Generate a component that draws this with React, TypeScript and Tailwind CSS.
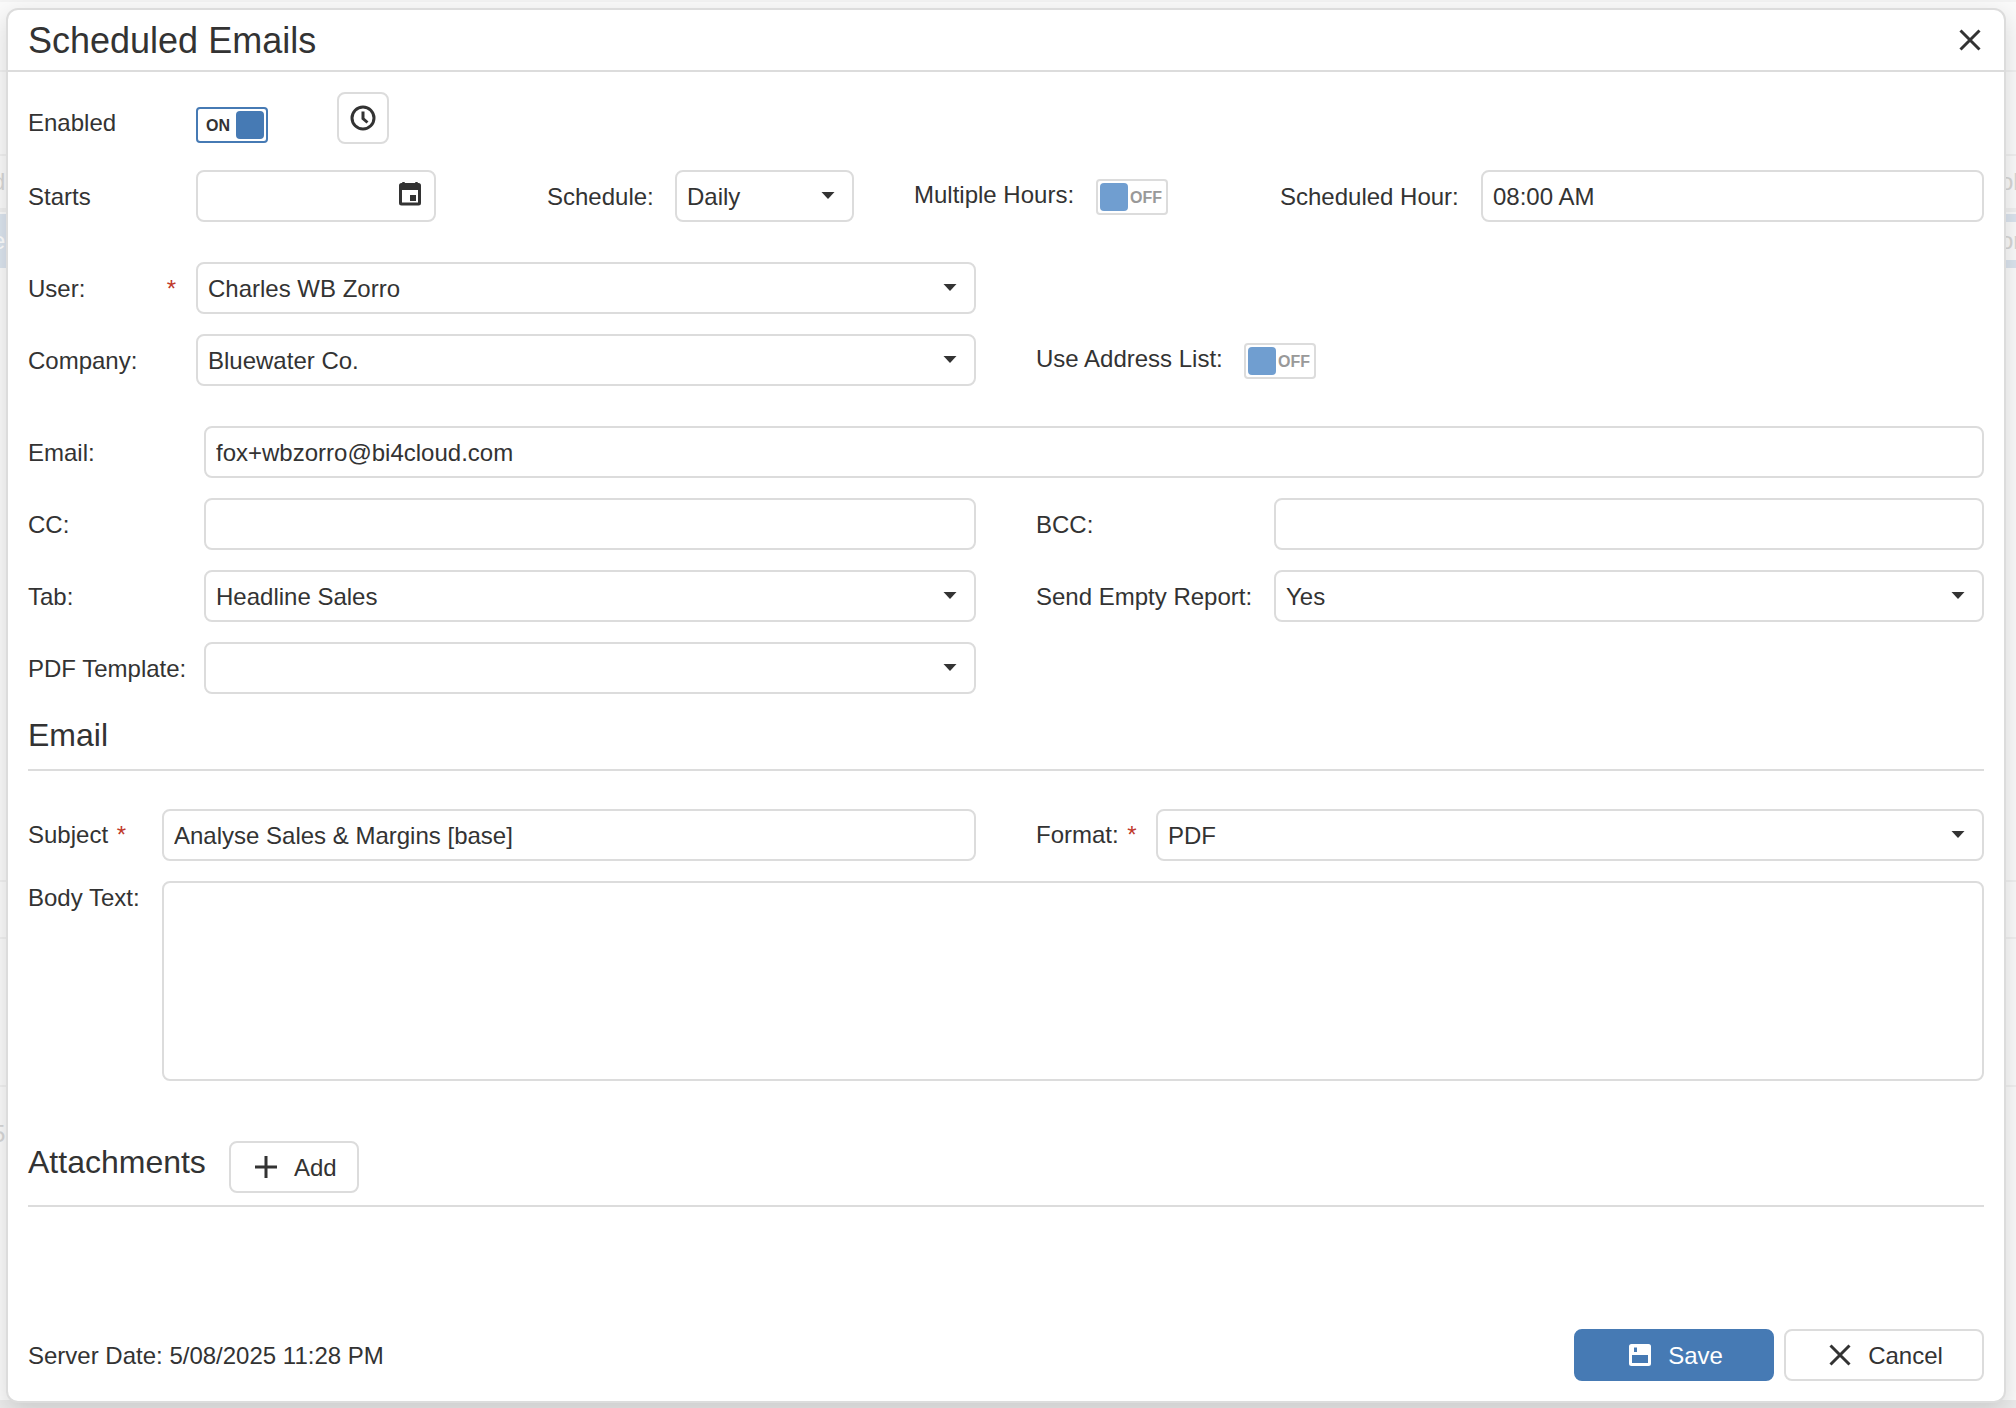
import React, { useId, useState } from "react";

const fieldClass =
  "block h-[52px] w-full min-w-0 rounded-lg border-2 border-[#dcdcdc] bg-white px-2.5 pt-0.5 text-[24px] leading-7 text-[#333333] outline-none focus:border-[#467ab4]";

function TextField({ id, value = "", type = "text" }: { id: string; value?: string; type?: string }) {
  return <input id={id} type={type} defaultValue={value} className={fieldClass} />;
}

function SelectField({ id, options }: { id: string; options: string[] }) {
  return (
    <div className="relative w-full min-w-0">
      <select id={id} className={`${fieldClass} appearance-none pr-10`}>
        {options.map((o) => (
          <option key={o}>{o}</option>
        ))}
      </select>
      <svg viewBox="0 0 14 7" className="pointer-events-none absolute top-[22px] right-[19px] h-[7px] w-3.5" aria-hidden="true">
        <path d="M0.5 0h13L7 7z" fill="#333333" />
      </svg>
    </div>
  );
}

function Toggle({ id, initial = false }: { id: string; initial?: boolean }) {
  const [on, setOn] = useState(initial);
  return (
    <label
      htmlFor={id}
      className={`mt-0.5 flex h-9 w-[72px] shrink-0 cursor-pointer items-center justify-between rounded border-2 p-0.5 text-[16px] leading-5 font-bold ${
        on ? "border-[#467ab4] text-[#333333]" : "flex-row-reverse border-[#dcdcdc] text-[#999999]"
      }`}
    >
      <input id={id} type="checkbox" role="switch" checked={on} onChange={(e) => setOn(e.target.checked)} className="sr-only" />
      <span className="flex-1 pt-0.5 text-center">{on ? "ON" : "OFF"}</span>
      <span className={`size-7 rounded ${on ? "bg-[#467ab4]" : "bg-[#709ed0]"}`} />
    </label>
  );
}

function Star() {
  return <span className="pl-0.5 text-[#c0392b]">*</span>;
}

function CrossIcon() {
  return (
    <svg viewBox="0 0 22 22" className="size-[22px]" fill="none" stroke="currentColor" strokeWidth="3" aria-hidden="true">
      <path d="M1.500 1.500l19 19M20.500 1.500l-19 19" />
    </svg>
  );
}

function ClockIcon() {
  return (
    <svg viewBox="0 0 26 26" className="size-[26px]" fill="none" stroke="currentColor" strokeWidth="3" aria-hidden="true">
      <circle cx="13" cy="13" r="11" />
      <path d="M13 6.500v7l4.500 4" />
    </svg>
  );
}

function CalendarIcon() {
  return (
    <svg viewBox="0 0 22 24" className="h-6 w-[22px]" aria-hidden="true">
      <path
        fill="#333333"
        fillRule="evenodd"
        d="M3 1C3 .4 3.700 0 4.500 0S6 .4 6 1h10C16 .4 16.700 0 17.500 0S19 .4 19 1h.5A2.500 2.500 0 0 1 22 3.500v17.600a2.500 2.500 0 0 1-2.500 2.500h-17A2.500 2.500 0 0 1 0 21.100V3.500A2.500 2.500 0 0 1 2.500 1zM3 8v12.500h16V8zM11 13h6v6h-6z"
      />
    </svg>
  );
}

function SaveIcon() {
  return (
    <svg viewBox="0 0 22 22" className="size-[22px]" fill="currentColor" aria-hidden="true">
      <path
        fillRule="evenodd"
        d="M2.500 0h17A2.500 2.500 0 0 1 22 2.500v17a2.500 2.500 0 0 1-2.500 2.500h-17A2.500 2.500 0 0 1 0 19.500v-17A2.500 2.500 0 0 1 2.500 0zM5 3.500V8h3V3.500zM3 11v8h16v-8z"
      />
    </svg>
  );
}

function PlusIcon() {
  return (
    <svg viewBox="0 0 22 22" className="size-[22px]" fill="none" stroke="currentColor" strokeWidth="3" aria-hidden="true">
      <path d="M11 0v22M0 11h22" />
    </svg>
  );
}

function Row({
  label,
  htmlFor,
  labelClass,
  required,
  children,
}: {
  label: string;
  htmlFor: string;
  labelClass: string;
  required?: React.ReactNode;
  children: React.ReactNode;
}) {
  return (
    <div className="flex items-center">
      <label htmlFor={htmlFor} className={`shrink-0 whitespace-nowrap ${labelClass}`}>
        {label}
        {required}
      </label>
      {children}
    </div>
  );
}

/* Dimmed page that stays visible around the edges of the dialog. */
function Backdrop() {
  return (
    <div aria-hidden="true" className="absolute inset-0 flex flex-col overflow-hidden bg-[#fafafa] text-[#d6d6d6]">
      <div className="h-0.5 bg-[#f3f3f3]" />
      <div className="h-[70px] border-b-2 border-[#f0f0f0]" />
      <div className="h-[84px] border-b-2 border-[#f0f0f0]" />
      <div className="flex h-14 items-center justify-between border-b-4 border-[#f0f0f0]">
        <span className="-ml-2">d</span>
        <span className="w-4">ol</span>
      </div>
      <div className="flex h-14 pt-0.5">
        <div className="flex w-3 items-center bg-[#dbe4ee] text-white">
          <span className="-ml-2">e</span>
        </div>
        <div className="flex flex-1 items-center justify-end border-y-8 border-[#dbe4ee]">
          <span className="w-4">or</span>
        </div>
      </div>
      <div className="h-[614px] border-b-2 border-[#f0f0f0]" />
      <div className="h-[57px] border-b-2 border-[#f0f0f0]" />
      <div className="h-[148px] border-b-2 border-[#f0f0f0]" />
      <div className="flex h-[90px] items-center">
        <span className="-ml-2 pt-1">5</span>
      </div>
      <div className="mt-auto h-2 bg-[#ebebeb]" />
    </div>
  );
}

const buttonClass = "flex h-[52px] items-center justify-center rounded-lg border-2";

export default function App() {
  const uid = useId();
  const id = (name: string) => `${uid}-${name}`;

  return (
    <div className="relative flex min-h-screen flex-col px-1.5 pt-2 pb-[5px] font-['Liberation_Sans',Arial,sans-serif] text-[24px] leading-7 text-[#333333]">
      <Backdrop />
      <div
        role="dialog"
        aria-labelledby={id("title")}
        className="relative mr-1 flex flex-1 flex-col rounded-xl border-2 border-[#dcdcdc] bg-white shadow-[0_8px_24px_rgba(0,0,0,0.14)]"
      >
        <header className="flex h-[62px] items-center justify-between border-b-2 border-[#dcdcdc] px-5">
          <h1 id={id("title")} className="pt-0.5 text-[36px] leading-10">
            Scheduled Emails
          </h1>
          <button type="button" aria-label="Close" className="flex w-7 items-center justify-center">
            <CrossIcon />
          </button>
        </header>

        <form className="flex flex-1 flex-col p-5" onSubmit={(e) => e.preventDefault()}>
          <div className="flex h-[52px] items-center">
            <label htmlFor={id("enabled")} className="w-[168px] shrink-0 pt-2.5">
              Enabled
            </label>
            <div className="mt-3">
              <Toggle id={id("enabled")} initial />
            </div>
            <button type="button" aria-label="Schedule time" className={`${buttonClass} ml-[69px] w-[52px] border-[#dcdcdc]`}>
              <ClockIcon />
            </button>
          </div>

          <div className="mt-[26px] flex items-center">
            <label htmlFor={id("starts")} className="w-[168px] shrink-0 pt-0.5">
              Starts
            </label>
            <div className="relative w-60 shrink-0">
              <TextField id={id("starts")} />
              <button type="button" aria-label="Pick a date" className="absolute top-3 right-[15px]">
                <CalendarIcon />
              </button>
            </div>
            <label htmlFor={id("schedule")} className="ml-[111px] w-32 shrink-0 pt-0.5">
              Schedule:
            </label>
            <div className="w-[179px] shrink-0">
              <SelectField id={id("schedule")} options={["Daily", "Weekly", "Monthly"]} />
            </div>
            <label htmlFor={id("multi")} className="ml-[60px] w-[182px] shrink-0 pb-0.5">
              Multiple Hours:
            </label>
            <Toggle id={id("multi")} />
            <label htmlFor={id("hour")} className="ml-28 w-[201px] shrink-0 pt-0.5">
              Scheduled Hour:
            </label>
            <TextField id={id("hour")} value="08:00 AM" />
          </div>

          <div className="mt-10 grid grid-cols-2 gap-x-[60px] gap-y-5">
            <Row
              label="User:"
              htmlFor={id("user")}
              labelClass="flex w-[168px] justify-between pt-0.5 pr-5"
              required={<Star />}
            >
              <SelectField id={id("user")} options={["Charles WB Zorro"]} />
            </Row>
            <div />
            <Row label="Company:" htmlFor={id("company")} labelClass="w-[168px] pt-0.5">
              <SelectField id={id("company")} options={["Bluewater Co."]} />
            </Row>
            <Row label="Use Address List:" htmlFor={id("addresses")} labelClass="w-[208px] pb-0.5">
              <Toggle id={id("addresses")} />
            </Row>
          </div>

          <div className="mt-10 grid grid-cols-2 gap-x-[60px] gap-y-5">
            <div className="col-span-2">
              <Row label="Email:" htmlFor={id("email")} labelClass="w-44 pt-0.5">
                <TextField id={id("email")} value="fox+wbzorro@bi4cloud.com" />
              </Row>
            </div>
            <Row label="CC:" htmlFor={id("cc")} labelClass="w-44 pt-0.5">
              <TextField id={id("cc")} />
            </Row>
            <Row label="BCC:" htmlFor={id("bcc")} labelClass="w-[238px] pt-0.5">
              <TextField id={id("bcc")} />
            </Row>
            <Row label="Tab:" htmlFor={id("tab")} labelClass="w-44 pt-0.5">
              <SelectField id={id("tab")} options={["Headline Sales"]} />
            </Row>
            <Row label="Send Empty Report:" htmlFor={id("empty")} labelClass="w-[238px] pt-0.5">
              <SelectField id={id("empty")} options={["Yes", "No"]} />
            </Row>
            <Row label="PDF Template:" htmlFor={id("template")} labelClass="w-44 pt-0.5">
              <SelectField id={id("template")} options={[""]} />
            </Row>
          </div>

          <h2 className="mt-[21px] border-b-2 border-[#dcdcdc] pb-3.5 text-[32px] leading-10">Email</h2>

          <div className="mt-[38px] grid grid-cols-2 gap-x-[60px] gap-y-5">
            <Row label="Subject " htmlFor={id("subject")} labelClass="w-[134px]" required={<Star />}>
              <TextField id={id("subject")} value="Analyse Sales & Margins [base]" />
            </Row>
            <Row label="Format: " htmlFor={id("format")} labelClass="w-[120px]" required={<Star />}>
              <SelectField id={id("format")} options={["PDF"]} />
            </Row>
            <div className="col-span-2 flex items-start">
              <label htmlFor={id("body")} className="w-[134px] shrink-0 pt-[3px]">
                Body Text:
              </label>
              <textarea
                id={id("body")}
                className="block h-[200px] w-full resize-none rounded-lg border-2 border-[#dcdcdc] px-2.5 py-2 outline-none focus:border-[#467ab4]"
              />
            </div>
          </div>

          <div className="mt-[60px] flex items-start gap-[23px] border-b-2 border-[#dcdcdc] pb-3">
            <h2 className="pt-px text-[32px] leading-10">Attachments</h2>
            <button type="button" className={`${buttonClass} w-[130px] gap-[17px] border-[#dcdcdc] pl-1`}>
              <PlusIcon />
              <span className="pt-0.5">Add</span>
            </button>
          </div>

          <footer className="mt-auto flex items-center gap-2.5">
            <p className="flex-1 pt-0.5">Server Date: 5/08/2025 11:28 PM</p>
            <button type="submit" className={`${buttonClass} w-[200px] gap-[17px] border-[#467ab4] bg-[#467ab4] pl-1 text-white`}>
              <SaveIcon />
              <span className="pt-0.5">Save</span>
            </button>
            <button type="button" className={`${buttonClass} w-[200px] gap-[17px] border-[#dcdcdc] pl-1`}>
              <CrossIcon />
              <span className="pt-0.5">Cancel</span>
            </button>
          </footer>
        </form>
      </div>
    </div>
  );
}
